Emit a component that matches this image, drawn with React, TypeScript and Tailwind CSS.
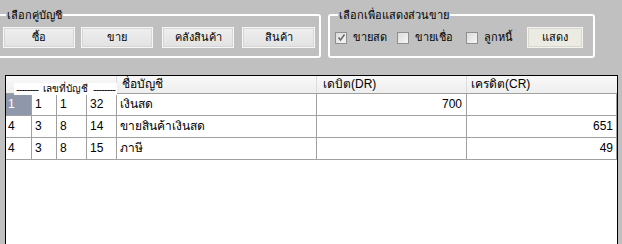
import React from "react";

const rows = [
  { a: "1", b: "1", c: "1", d: "32", name: "เงินสด", dr: "700", cr: "", selected: true },
  { a: "4", b: "3", c: "8", d: "14", name: "ขายสินค้าเงินสด", dr: "", cr: "651" },
  { a: "4", b: "3", c: "8", d: "15", name: "ภาษี", dr: "", cr: "49" },
];

const colW = ["w-[26px]", "w-[25px]", "w-[30px]", "w-[30px]", "w-[200px]", "w-[150px]", "w-[150px]"];

function WinButton({ label, className = "" }: { label: string; className?: string }) {
  return (
    <div
      className={`h-[21px] flex items-center justify-center border border-[#f7f7f7] bg-gradient-to-b from-[#efefef] to-[#e2e2e2] shadow-[inset_0_0_0_1px_#d6d6d6] text-[11px] text-black ${className}`}
    >
      {label}
    </div>
  );
}

function Check({ label, checked, className }: { label: string; checked?: boolean; className: string }) {
  return (
    <div className={`flex items-center shrink-0 ${className}`}>
      <div className="w-[12px] h-[12px] border border-[#8e8f8f] bg-gradient-to-br from-[#dcdcdc] to-[#f6f6f6] flex items-center justify-center">
        {checked && (
          <svg width="9" height="9" viewBox="0 0 9 9">
            <path d="M1.5 4.5 L3.5 7 L7.5 1.5" stroke="#6a6a6a" strokeWidth="1.6" fill="none" />
          </svg>
        )}
      </div>
      <span className="ml-[6px] text-[11px] text-black">{label}</span>
    </div>
  );
}

export default function App() {
  return (
    <div
      className="w-[622px] h-[244px] bg-[#c0c0c0] overflow-hidden"
      style={{ fontFamily: '"Liberation Sans", Tahoma, sans-serif' }}
    >
      {/* Group boxes */}
      <div className="flex pt-[14px]">
        <div className="relative ml-[-4px] w-[325px] h-[44px] border-2 border-white rounded-[3px] pl-[5px] pt-[11px] flex">
          <span className="absolute top-[-9px] left-[8px] bg-[#c0c0c0] px-[1px] text-[11px] text-black leading-[16px]">
            เลือกคู่บัญชี
          </span>
          <WinButton label="ซื้อ" className="w-[72px]" />
          <WinButton label="ขาย" className="w-[72px] ml-[6px]" />
          <WinButton label="คลังสินค้า" className="w-[72px] ml-[9px]" />
          <WinButton label="สินค้า" className="w-[73px] ml-[8px]" />
        </div>
        <div className="relative ml-[7px] w-[267px] h-[44px] border-2 border-white rounded-[3px] pt-[11px] flex items-start">
          <span className="absolute top-[-9px] left-[8px] bg-[#c0c0c0] px-[1px] text-[11px] text-black leading-[16px]">
            เลือกเพื่อแสดงส่วนขาย
          </span>
          <div className="flex items-center h-[21px] pl-[5px]">
            <Check label="ขายสด" checked className="w-[62px]" />
            <Check label="ขายเชื่อ" className="w-[69px]" />
            <Check label="ลูกหนี้" className="w-[61px]" />
            <div className="w-[56px] h-[21px] flex items-center justify-center border border-[#f4f3ee] bg-[#ebeae3] shadow-[inset_0_0_0_1px_#d9d8d0] text-[11px] text-black">
              แสดง
            </div>
          </div>
        </div>
      </div>

      {/* Grid */}
      <div className="relative ml-[5px] mt-[17px] w-[613px] h-[200px] border border-black bg-white text-[12px] text-black">
        <div className="flex h-[18px] bg-gradient-to-b from-[#f9f9f9] to-[#eeeeee] border-b border-[#a0a0a0]">
          {colW.slice(0, 4).map((w, i) => (
            <div key={i} className={`${w} ${i === 3 ? "border-r border-[#dcdcdc]" : ""}`} />
          ))}
          <div className={`${colW[4]} border-r border-[#dcdcdc] pl-[5px] leading-[17px]`}>ชื่อบัญชี</div>
          <div className={`${colW[5]} border-r border-[#dcdcdc] pl-[6px] leading-[17px]`}>เดบิต(DR)</div>
          <div className={`${colW[6]} pl-[4px] leading-[17px]`}>เครดิต(CR)</div>
        </div>
        {rows.map((r, ri) => (
          <div key={ri} className="flex h-[22px] border-b border-[#a0a0a0]">
            <div
              className={`${colW[0]} border-r border-[#a0a0a0] pl-[2px] leading-[21px] ${
                r.selected ? "bg-[#8e98aa] text-white" : ""
              }`}
            >
              {r.a}
            </div>
            <div className={`${colW[1]} border-r border-[#a0a0a0] pl-[3px] leading-[21px]`}>{r.b}</div>
            <div className={`${colW[2]} border-r border-[#a0a0a0] pl-[3px] leading-[21px]`}>{r.c}</div>
            <div className={`${colW[3]} border-r border-[#a0a0a0] pl-[3px] leading-[21px]`}>{r.d}</div>
            <div className={`${colW[4]} border-r border-[#a0a0a0] pl-[3px] leading-[21px]`}>{r.name}</div>
            <div className={`${colW[5]} border-r border-[#a0a0a0] pr-[4px] text-right leading-[21px]`}>{r.dr}</div>
            <div className={`${colW[6]} border-r border-[#a0a0a0] pr-[3px] text-right leading-[21px]`}>{r.cr}</div>
          </div>
        ))}
        {/* label laid over the header of the four number columns */}
        <div className="absolute top-[7px] left-[8px] w-[103px] h-[12px] bg-white flex items-center justify-between px-[2px] leading-[12px] text-black whitespace-nowrap">
          <span className="text-[11px] tracking-[-0.9px]">--------</span>
          <span className="text-[10px]">เลขที่บัญชี</span>
          <span className="text-[11px] tracking-[-0.9px]">--------</span>
        </div>
      </div>
    </div>
  );
}
